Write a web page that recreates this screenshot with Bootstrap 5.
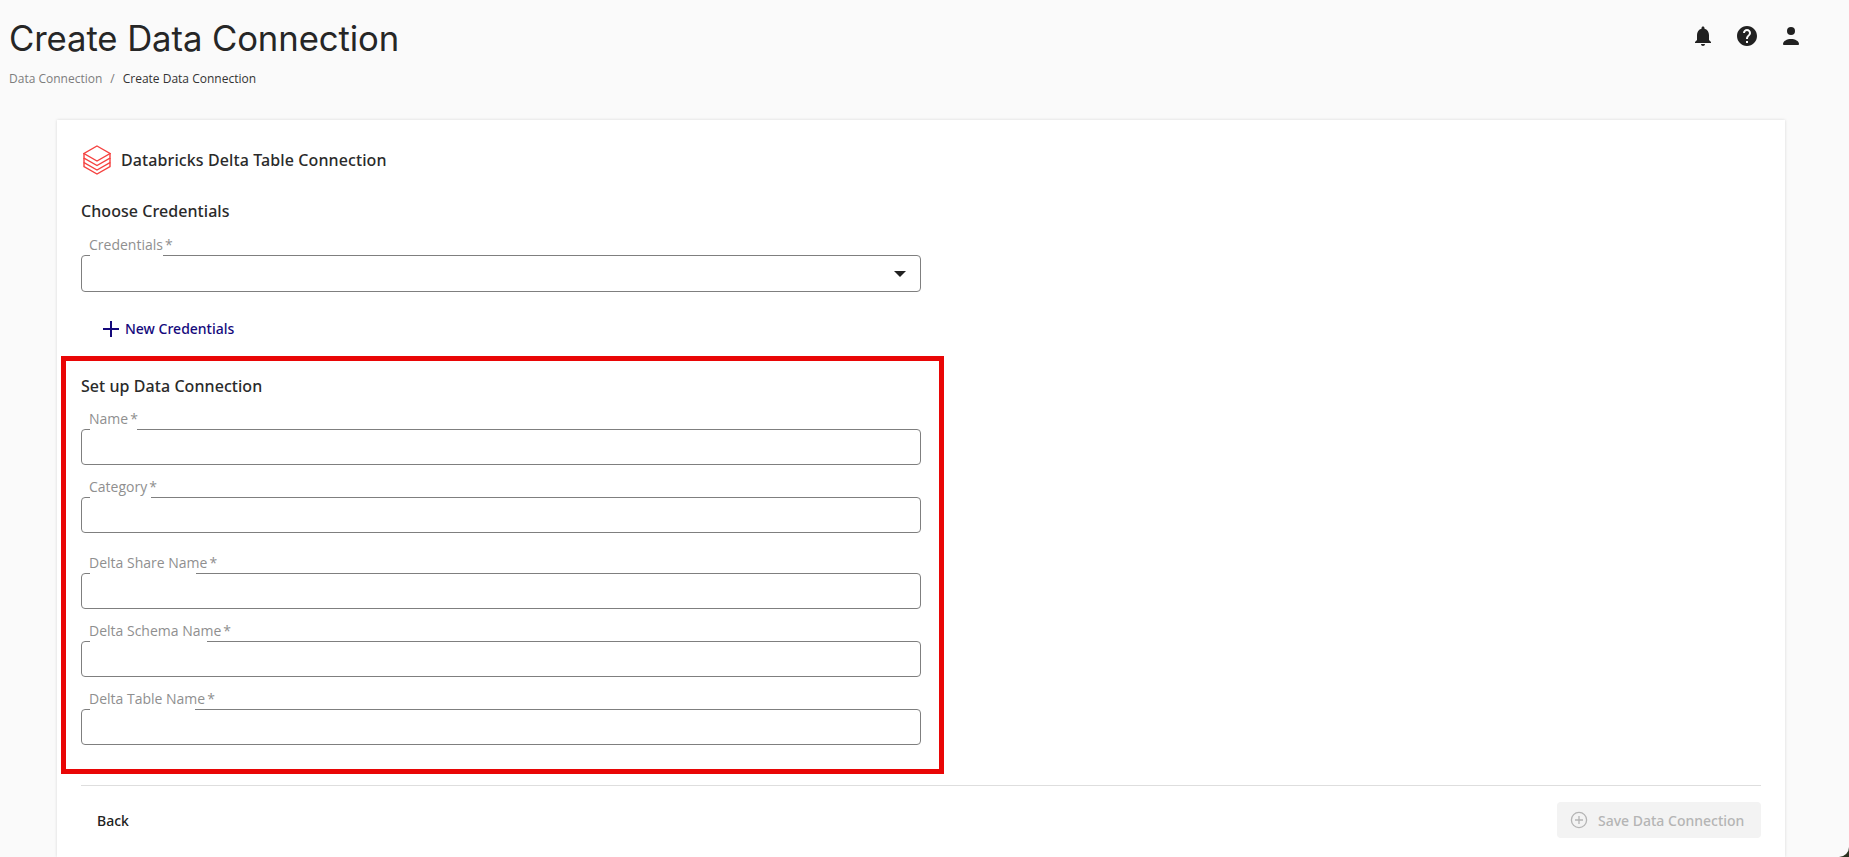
<!DOCTYPE html>
<html lang="en">
<head>
<meta charset="utf-8">
<title>Create Data Connection</title>
<link href="https://cdn.jsdelivr.net/npm/bootstrap@5.3.0/dist/css/bootstrap.min.css" rel="stylesheet">
<style>
html,body{height:857px;overflow:hidden}
body{background:#fafafa;color:#212121;font-family:"Noto Sans","Open Sans",sans-serif;font-size:14px}
.page-head{height:120px;padding:0 46px 0 9px}
.page-title{font-family:Inter,"Liberation Sans",sans-serif;font-size:34.7px;font-weight:400;line-height:40px;margin:18px 0 0;letter-spacing:-.1px;color:#262626}
.crumbs{font-family:"Open Sans",sans-serif;font-size:12px;--bs-breadcrumb-divider-color:#777;--bs-breadcrumb-item-padding-x:8px;line-height:17px;margin:12px 0 0}
.crumbs .breadcrumb-item a{color:#7d7d7d;text-decoration:none}
.crumbs .breadcrumb-item.active{color:#333}
.top-icons{gap:20px;padding-top:24px}
.top-icons svg{width:24px;height:24px;fill:#212121;display:block}
.sheet{margin:0 64px 0 57px;height:737px;background:#fff;box-shadow:0 0 3px rgba(0,0,0,.14);padding:25px 24px 0}
.conn-head{height:30px;gap:10px;font-size:16px;font-weight:500;color:#2a2a2a;letter-spacing:.1px}
.conn-head svg{width:28px;height:30px;flex:none;margin-left:2px}
.sec-title{font-size:16px;font-weight:500;line-height:22px;margin:0;color:#2a2a2a;letter-spacing:.06px}
.choose-title{margin-top:25px;margin-bottom:33px}
.field{position:relative;width:840px;height:36px;border:1px solid #7f7f7f;border-radius:4px}
.field::before{content:"";position:absolute;left:8px;top:-1px;height:1px;background:#fff;width:var(--gap-w)}
.field-tall{height:37px}
.gap-cred{--gap-w:73px}
.gap-name{--gap-w:47px}
.gap-cat{--gap-w:61px}
.gap-share{--gap-w:106px}
.gap-schema{--gap-w:117px}
.gap-table{--gap-w:105px}
.notch{position:absolute;left:7px;top:-20px;display:flex;color:#8f8f8f;font-family:"Open Sans",sans-serif;font-size:14px;line-height:18px}
.notch-star{padding-left:2px}
.caret-down{position:absolute;right:14px;top:15px;width:0;height:0;border-left:6.5px solid transparent;border-right:6.5px solid transparent;border-top:6.5px solid #212121}
.new-cred{color:#14097c;font-size:14px;font-weight:500;padding:0 0 0 22px;gap:6px;height:24px;border:0;background:none;margin-top:24px}
.new-cred svg{width:16px;height:16px;margin-top:2px}
.setup-box{border:5px solid #e90606;width:883px;height:418px;margin:16px 0 0 -20px;padding:14px 18px 0 15px}
.setup-box .sec-title{margin-bottom:32px}
.stack-a{margin-bottom:32px}
.stack-b{margin-bottom:40px}
.rule{border-top:1px solid #dedede;margin:11px 0 0;opacity:1}
.foot-bar{padding-top:16px}
.back-btn{font-size:14px;font-weight:500;color:#212121;padding:0 16px;height:36px;border:0;background:none}
.save-btn,.save-btn:disabled{width:204px;height:36px;background:#f3f3f3;color:#b5b5b5;font-size:14px;font-weight:500;border:0;border-radius:4px;gap:10px;padding:0 0 0 13px;opacity:1}
.save-btn svg{width:18px;height:18px}
.win-corner{position:absolute;right:0;bottom:0;width:10px;height:10px;background:#2a3320;overflow:hidden}
.win-corner::after{content:"";position:absolute;left:-10px;top:-10px;width:20px;height:20px;border-radius:10px;background:#fafafa}
</style>
</head>
<body>
<header class="page-head d-flex justify-content-between">
  <div>
    <h1 class="page-title">Create Data Connection</h1>
    <nav><ol class="breadcrumb crumbs"><li class="breadcrumb-item"><a href="#">Data Connection</a></li><li class="breadcrumb-item active">Create Data Connection</li></ol></nav>
  </div>
  <div class="d-flex top-icons align-items-start">
    <svg viewBox="0 0 24 24"><path d="M12 22c1.1 0 2-.9 2-2h-4c0 1.1.9 2 2 2zm6-6v-5c0-3.07-1.63-5.64-4.5-6.32V4c0-.83-.67-1.5-1.5-1.5s-1.5.67-1.5 1.5v.68C7.64 5.36 6 7.92 6 11v5l-2 2v1h16v-1l-2-2z"/></svg>
    <svg viewBox="0 0 24 24"><path d="M12 2C6.48 2 2 6.48 2 12s4.48 10 10 10 10-4.48 10-10S17.52 2 12 2zm1 17h-2v-2h2v2zm2.07-7.75l-.9.92C13.45 12.9 13 13.5 13 15h-2v-.5c0-1.1.45-2.1 1.17-2.83l1.24-1.26c.37-.36.59-.86.59-1.41 0-1.1-.9-2-2-2s-2 .9-2 2H8c0-2.21 1.79-4 4-4s4 1.79 4 4c0 .88-.36 1.68-.93 2.25z"/></svg>
    <svg viewBox="0 0 24 24"><circle cx="12" cy="7" r="4"/><path d="M4 20c0-3 4-5 8-5s8 2 8 5c0 .5-.5 1-1 1H5c-.5 0-1-.5-1-1z"/></svg>
  </div>
</header>
<main class="sheet">
  <div class="conn-head d-flex align-items-center">
    <svg viewBox="0 0 28 30" fill="none" stroke="#f5413f" stroke-width="1.4"><path d="M14 1 27 8.500 14 16 1 8.500z"/><path d="M1 8.500V13l13 7.500 13-7.500V8.500"/><path d="M1 13v4.500L14 25l13-7.500V13"/><path d="M1 17.500V21.500L14 29l13-7.500v-4"/></svg>
    <span>Databricks Delta Table Connection</span>
  </div>
  <h2 class="sec-title choose-title">Choose Credentials</h2>
  <div class="field field-tall gap-cred"><label class="notch"><span>Credentials</span><span class="notch-star">*</span></label><span class="caret-down"></span></div>
  <button type="button" class="new-cred btn d-flex align-items-center"><svg viewBox="0 0 16 16" fill="none" stroke="#14097c" stroke-width="2"><path d="M8 0v16M0 8h16"/></svg>New Credentials</button>
  <section class="setup-box">
    <h2 class="sec-title">Set up Data Connection</h2>
    <div class="field stack-a gap-name"><label class="notch"><span>Name</span><span class="notch-star">*</span></label></div>
    <div class="field stack-b gap-cat"><label class="notch"><span>Category</span><span class="notch-star">*</span></label></div>
    <div class="field stack-a gap-share"><label class="notch"><span>Delta Share Name</span><span class="notch-star">*</span></label></div>
    <div class="field stack-a gap-schema"><label class="notch"><span>Delta Schema Name</span><span class="notch-star">*</span></label></div>
    <div class="field gap-table"><label class="notch"><span>Delta Table Name</span><span class="notch-star">*</span></label></div>
  </section>
  <hr class="rule">
  <div class="foot-bar d-flex justify-content-between">
    <button type="button" class="back-btn btn">Back</button>
    <button type="button" class="save-btn btn d-flex align-items-center justify-content-start" disabled><svg viewBox="0 0 18 18" fill="none" stroke="#b5b5b5" stroke-width="1.3"><circle cx="9" cy="9" r="7.600"/><path d="M9 5v8M5 9h8"/></svg>Save Data Connection</button>
  </div>
</main>
<div class="win-corner"></div>
</body>
</html>
